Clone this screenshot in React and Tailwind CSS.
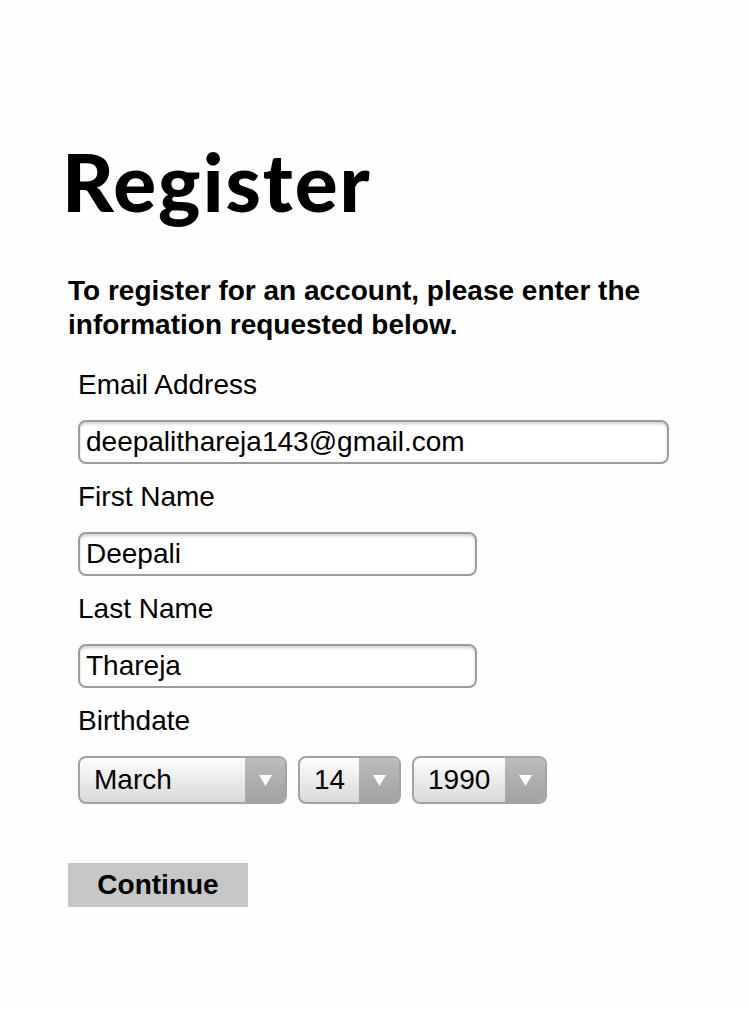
import React from "react";
import { useState } from "react";

const SelectBox = ({ value, options, onChange, width }) => {
  return (
    <div
      className={`relative h-[48px] ${width} rounded-[8px] border-2 border-[#a3a3a3] overflow-hidden bg-gradient-to-b from-[#fdfdfd] to-[#d9d9d9]`}
    >
      <select
        value={value}
        onChange={(e) => onChange(e.target.value)}
        className="appearance-none w-full h-full bg-transparent pl-[14px] pr-[44px] text-[28px] text-black outline-none font-['Liberation_Sans',Arial,sans-serif]"
      >
        {options.map((o) => (
          <option key={o} value={o}>
            {o}
          </option>
        ))}
      </select>
      <div className="pointer-events-none absolute top-0 right-0 h-full w-[40px] flex items-center justify-center bg-gradient-to-b from-[#bcbcbc] to-[#a2a2a2]">
        <svg width="13" height="11" viewBox="0 0 13 11">
          <polygon points="0,0 13,0 6.5,11" fill="#ffffff" />
        </svg>
      </div>
    </div>
  );
};

const months = [
  "January",
  "February",
  "March",
  "April",
  "May",
  "June",
  "July",
  "August",
  "September",
  "October",
  "November",
  "December",
];

const App = () => {
  const [email, setEmail] = useState("deepalithareja143@gmail.com");
  const [firstName, setFirstName] = useState("Deepali");
  const [lastName, setLastName] = useState("Thareja");
  const [month, setMonth] = useState("March");
  const [day, setDay] = useState("14");
  const [year, setYear] = useState("1990");

  const days = Array.from({ length: 31 }, (_, i) => String(i + 1));
  const years = Array.from({ length: 100 }, (_, i) => String(2014 - i));

  const inputClass =
    "block h-[44px] rounded-[8px] border-2 border-[#9c9c9c] bg-white px-[6px] text-[28px] text-black outline-none shadow-[inset_0_2px_3px_rgba(0,0,0,0.18)] font-['Liberation_Sans',Arial,sans-serif]";

  return (
    <div className="min-h-screen bg-[#fefefe] px-[68px] pt-[141px] font-['Liberation_Sans',Arial,sans-serif] text-black">
      {/* Heading */}
      <h1 className="ml-[-6px] text-[80px] leading-[80px] font-black font-['Lato',sans-serif] tracking-[2px]">
        Register
      </h1>

      <p className="mt-[53px] text-[28px] leading-[34px] font-bold">
        To register for an account, please enter the information requested
        below.
      </p>

      {/* Form */}
      <form className="mt-[27px] pl-[10px]" onSubmit={(e) => e.preventDefault()}>
        <label className="block text-[28px] leading-[32px] mb-[19px]">
          Email Address
        </label>
        <input
          type="email"
          value={email}
          onChange={(e) => setEmail(e.target.value)}
          className={`${inputClass} w-[591px]`}
        />

        <label className="block mt-[17px] text-[28px] leading-[32px] mb-[19px]">
          First Name
        </label>
        <input
          type="text"
          value={firstName}
          onChange={(e) => setFirstName(e.target.value)}
          className={`${inputClass} w-[399px]`}
        />

        <label className="block mt-[17px] text-[28px] leading-[32px] mb-[19px]">
          Last Name
        </label>
        <input
          type="text"
          value={lastName}
          onChange={(e) => setLastName(e.target.value)}
          className={`${inputClass} w-[399px]`}
        />

        <label className="block mt-[17px] text-[28px] leading-[32px] mb-[19px]">
          Birthdate
        </label>
        <div className="flex gap-[11px]">
          <SelectBox value={month} options={months} onChange={setMonth} width="w-[209px]" />
          <SelectBox value={day} options={days} onChange={setDay} width="w-[103px]" />
          <SelectBox value={year} options={years} onChange={setYear} width="w-[135px]" />
        </div>
      </form>

      <button
        type="submit"
        className="mt-[59px] block w-[180px] h-[44px] bg-[#c6c6c6] text-[28px] font-bold text-black"
      >
        Continue
      </button>
    </div>
  );
};

export default App;
